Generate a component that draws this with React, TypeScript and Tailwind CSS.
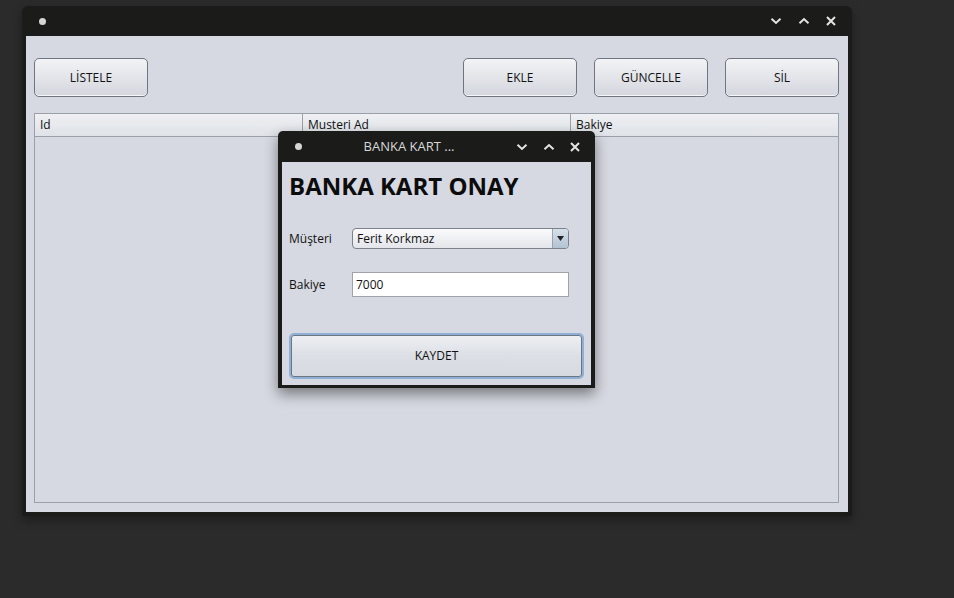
import React from "react";

const font = { fontFamily: '"Open Sans", "Noto Sans", sans-serif' };

function TitleIcons({ gap }: { gap: string }) {
  return (
    <div className={`flex items-center ${gap}`}>
      <svg width="12" height="8" viewBox="0 0 12 8">
        <path d="M1.5 1.8 L6 6 L10.5 1.8" stroke="#e4e4e4" strokeWidth="2" fill="none" />
      </svg>
      <svg width="12" height="8" viewBox="0 0 12 8">
        <path d="M1.5 6.2 L6 2 L10.5 6.2" stroke="#e4e4e4" strokeWidth="2" fill="none" />
      </svg>
      <svg width="10" height="10" viewBox="0 0 10 10">
        <path d="M1 1 L9 9 M9 1 L1 9" stroke="#e4e4e4" strokeWidth="2" fill="none" />
      </svg>
    </div>
  );
}

function Btn({ label, className = "" }: { label: string; className?: string }) {
  return (
    <button
      className={`h-[39px] w-[114px] rounded-[5px] border border-[#6f7680] bg-gradient-to-b from-[#f2f3f5] via-[#e3e5ea] to-[#d3d6dd] text-[12px] text-[#111] shadow-[inset_0_-1px_0_#f6f7f9] ${className}`}
    >
      {label}
    </button>
  );
}

export default function App() {
  return (
    <div className="relative h-[598px] w-[954px] overflow-hidden bg-[#2b2b2b]" style={font}>
      {/* main window */}
      <div className="absolute left-[22px] top-[6px] flex h-[510px] w-[830px] flex-col rounded-t-[6px] bg-[#1b1c1a] shadow-[0_4px_10px_rgba(0,0,0,0.35)]">
        <div className="flex h-[30px] shrink-0 items-center pl-[17px] pr-[16px]">
          <div className="h-[7px] w-[7px] rounded-full bg-[#d6d6d6]" />
          <div className="flex-1" />
          <TitleIcons gap="gap-[16px]" />
        </div>
        <div className="mx-[4px] mb-[4px] flex flex-1 flex-col bg-[#d6d9e1] pl-[8px] pr-[9px] pb-[9px] pt-[22px]">
          <div className="flex items-center">
            <Btn label="LİSTELE" />
            <div className="flex-1" />
            <div className="flex gap-[17px]">
              <Btn label="EKLE" />
              <Btn label="GÜNCELLE" />
              <Btn label="SİL" />
            </div>
          </div>
          <div className="mt-[16px] flex flex-1 flex-col border border-[#9aa0a9]">
            <div className="grid h-[23px] grid-cols-[268px_268px_1fr] border-b border-[#9aa0a9] bg-gradient-to-b from-[#eef0f3] to-[#dfe2e7] text-[12px] text-[#111]">
              <div className="border-r border-[#9aa0a9] pl-[5px] leading-[22px]">Id</div>
              <div className="border-r border-[#9aa0a9] pl-[5px] leading-[22px]">Musteri Ad</div>
              <div className="pl-[5px] leading-[22px]">Bakiye</div>
            </div>
            <div className="flex-1" />
          </div>
        </div>
      </div>

      {/* dialog */}
      <div className="absolute left-[278px] top-[131px] flex h-[257px] w-[317px] flex-col rounded-t-[5px] bg-[#1b1c1a] shadow-[0_6px_14px_rgba(0,0,0,0.45)]">
        <div className="relative flex h-[31px] shrink-0 items-center pl-[17px] pr-[15px]">
          <div className="h-[7px] w-[7px] rounded-full bg-[#d6d6d6]" />
          <div className="flex-1 text-center text-[13px] text-[#d8d8d8]">BANKA KART ...</div>
          <TitleIcons gap="gap-[15px]" />
        </div>
        <div className="mx-[4px] mb-[3px] flex flex-1 flex-col bg-[#d6d9e1] pl-[7px] pr-[8px] text-[12px] text-[#111]">
          <div className="mt-[9px] text-[24px] font-bold leading-[30px] text-[#0c0c0c]">BANKA KART ONAY</div>
          <div className="mt-[27px] flex items-center">
            <div className="w-[63px]">Müşteri</div>
            <div className="flex h-[21px] w-[217px] items-center rounded-[4px] border border-[#7b828c] bg-gradient-to-b from-[#fbfbfc] to-[#e3e5ea]">
              <div className="flex-1 pl-[4px]">Ferit Korkmaz</div>
              <div className="flex h-full w-[16px] items-center justify-center rounded-r-[3px] border-l border-[#9aa3ae] bg-gradient-to-b from-[#d6e0ea] to-[#b3c2d2]">
                <svg width="7" height="5" viewBox="0 0 7 5">
                  <path d="M0 0 L7 0 L3.5 5 Z" fill="#222" />
                </svg>
              </div>
            </div>
          </div>
          <div className="mt-[23px] flex items-center">
            <div className="w-[63px]">Bakiye</div>
            <div className="flex h-[25px] w-[217px] items-center border border-[#a0a4aa] bg-white pl-[3px]">7000</div>
          </div>
          <button className="mt-[36px] h-[46px] w-[295px] rounded-[5px] border-2 border-[#8fb0d6] bg-gradient-to-b from-[#eef0f3] via-[#dcdfe5] to-[#d6d9df] text-[12px] text-[#111] shadow-[inset_0_0_0_1px_#6d7580]">
            KAYDET
          </button>
        </div>
      </div>
    </div>
  );
}
